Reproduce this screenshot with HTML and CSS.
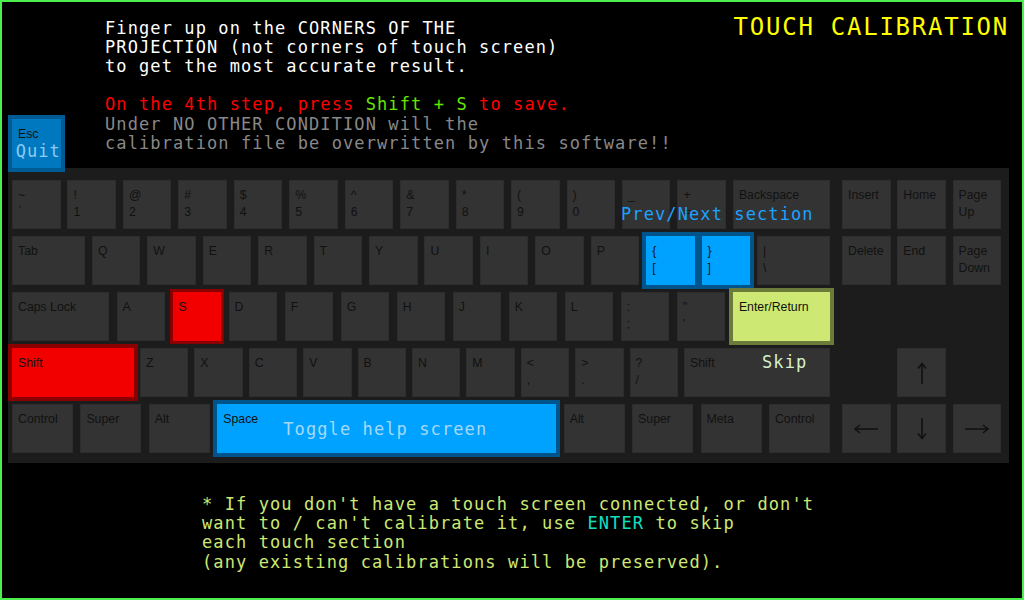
FILE: index.html
```html
<!DOCTYPE html>
<html lang="en">
<head>
<meta charset="utf-8">
<title>Touch Calibration</title>
<link rel="stylesheet" href="styles.css">
</head>
<body>
<div class="screen">
  <header class="top">
    <div class="key esc">Esc<div class="quit">Quit</div></div>
    <div class="intro">
      <p>Finger up on the CORNERS OF THE<br>PROJECTION (not corners of touch screen)<br>to get the most accurate result.</p>
      <p class="warn"><span class="red">On the 4th step, press </span><span class="green">Shift + S</span><span class="red"> to save.</span><br><span class="grey">Under NO OTHER CONDITION will the<br>calibration file be overwritten by this software!!</span></p>
    </div>
    <h1 class="title">TOUCH CALIBRATION</h1>
  </header>

  <section class="keyboard">
    <div class="main">
      <div class="row">
        <div class="key">~<br>`</div>
        <div class="key">!<br>1</div>
        <div class="key">@<br>2</div>
        <div class="key">#<br>3</div>
        <div class="key">$<br>4</div>
        <div class="key">%<br>5</div>
        <div class="key">^<br>6</div>
        <div class="key">&amp;<br>7</div>
        <div class="key">*<br>8</div>
        <div class="key">(<br>9</div>
        <div class="key">)<br>0</div>
        <div class="key">_<br>-</div>
        <div class="key">+<br>=</div>
        <div class="key w97">Backspace</div>
        <span class="hint hint-prev">Prev/Next section</span>
      </div>
      <div class="row">
        <div class="key w73">Tab</div>
        <div class="key">Q</div>
        <div class="key">W</div>
        <div class="key">E</div>
        <div class="key">R</div>
        <div class="key">T</div>
        <div class="key">Y</div>
        <div class="key">U</div>
        <div class="key">I</div>
        <div class="key">O</div>
        <div class="key">P</div>
        <div class="key hl-blue">{<br>[</div>
        <div class="key hl-blue">}<br>]</div>
        <div class="key w73">|<br>\</div>
      </div>
      <div class="row">
        <div class="key w97">Caps Lock</div>
        <div class="key">A</div>
        <div class="key hl-red thin">S</div>
        <div class="key">D</div>
        <div class="key">F</div>
        <div class="key">G</div>
        <div class="key">H</div>
        <div class="key">J</div>
        <div class="key">K</div>
        <div class="key">L</div>
        <div class="key">:<br>;</div>
        <div class="key">"<br>'</div>
        <div class="key w97 hl-enter">Enter/Return</div>
      </div>
      <div class="row">
        <div class="key w122 hl-red">Shift</div>
        <div class="key">Z</div>
        <div class="key">X</div>
        <div class="key">C</div>
        <div class="key">V</div>
        <div class="key">B</div>
        <div class="key">N</div>
        <div class="key">M</div>
        <div class="key">&lt;<br>,</div>
        <div class="key">&gt;<br>.</div>
        <div class="key">?<br>/</div>
        <div class="key w146">Shift<span class="hint hint-skip">Skip</span></div>
      </div>
      <div class="row">
        <div class="key w61">Control</div>
        <div class="key w61">Super</div>
        <div class="key w61">Alt</div>
        <div class="key w339 hl-space">Space<span class="hint hint-toggle">Toggle help screen</span></div>
        <div class="key w61">Alt</div>
        <div class="key w61">Super</div>
        <div class="key w61">Meta</div>
        <div class="key w61">Control</div>
      </div>
    </div>

    <div class="nav">
      <div class="row">
        <div class="key">Insert</div>
        <div class="key">Home</div>
        <div class="key">Page<br>Up</div>
      </div>
      <div class="row">
        <div class="key">Delete</div>
        <div class="key">End</div>
        <div class="key">Page<br>Down</div>
      </div>
      <div class="row"></div>
      <div class="row">
        <div class="key blank"></div>
        <div class="key arrow"><svg width="24" height="24" viewBox="0 0 24 24"><path d="M12 2.5V23M8 7.5L12 2.5L16 7.5"/></svg></div>
        <div class="key blank"></div>
      </div>
      <div class="row">
        <div class="key arrow"><svg width="24" height="24" viewBox="0 0 24 24"><path d="M1 12H24M6 8L1 12L6 16"/></svg></div>
        <div class="key arrow"><svg width="24" height="24" viewBox="0 0 24 24"><path d="M12 1V21.5M8 16.5L12 21.5L16 16.5"/></svg></div>
        <div class="key arrow"><svg width="24" height="24" viewBox="0 0 24 24"><path d="M0 12H23M18 8L23 12L18 16"/></svg></div>
      </div>
    </div>
  </section>

  <footer class="note">
    * If you don't have a touch screen connected, or don't<br>want to / can't calibrate it, use <span class="enter">ENTER</span> to skip<br>each touch section<br>(any existing calibrations will be preserved).
  </footer>
</div>
</body>
</html>
```

FILE: styles.css
```css
* {
  box-sizing: border-box;
  margin: 0;
  padding: 0;
}

html,
body {
  background: #000;
}

body {
  width: 1024px;
  height: 600px;
  overflow: hidden;
}

.screen {
  width: 1024px;
  height: 600px;
  border: 2px solid #4def4d;
  background: #000;
  display: flex;
  flex-direction: column;
  font-family: "DejaVu Sans Mono", monospace;
  font-size: 17px;
  line-height: 19.2px;
  letter-spacing: 1.1px;
  color: #fff;
}

/* ---------- header ---------- */
.top {
  display: flex;
  align-items: flex-start;
  height: 166px;
  padding: 0 13px 0 10px;
}

.intro {
  margin: 16.5px 0 0 44.5px;
}

.intro .warn {
  margin-top: 19.2px;
}

.red {
  color: #ff0000;
}

.green {
  color: #66e600;
}

.grey {
  color: #888;
}

.title {
  margin: 10.5px 0 0 auto;
  font-size: 24px;
  line-height: 28px;
  font-weight: normal;
  letter-spacing: 1.75px;
  color: #ffff00;
}

/* ---------- keyboard ---------- */
.keyboard {
  margin-left: 6px;
  width: 1001px;
  height: 295px;
  background: #1c1c1c;
  padding: 12px 8px 10px 4px;
  display: flex;
  gap: 12px;
}

.main {
  width: 818px;
  display: flex;
  flex-direction: column;
  gap: 7px;
}

.nav {
  width: 159px;
  display: flex;
  flex-direction: column;
  gap: 7px;
}

.row {
  position: relative;
  display: flex;
  justify-content: space-between;
  height: 49px;
}

.key {
  position: relative;
  flex: none;
  width: 48.5px;
  height: 49px;
  background: #333;
  border: 1px solid #2d2d2d;
  padding: 6px 5px 5px;
  font-family: "Liberation Sans", Arial, sans-serif;
  font-size: 12.3px;
  line-height: 17px;
  letter-spacing: 0;
  color: #111;
  white-space: nowrap;
}

.w61 { width: 61px; }
.w73 { width: 73px; }
.w97 { width: 97px; }
.w122 { width: 122px; }
.w146 { width: 146px; }
.w339 { width: 339px; }

.key.blank {
  visibility: hidden;
}

.key.arrow {
  display: flex;
  align-items: center;
  justify-content: center;
  padding: 0;
}

.key.arrow svg {
  fill: none;
  stroke: #111;
  stroke-width: 1.6;
}

/* highlighted keys */
.esc {
  align-self: flex-end;
  z-index: 1;
  background: #0078c0;
  border-color: #0078c0;
  box-shadow: 0 0 0 4px #005a94;
}

.quit {
  margin: -1px 0 0 -2.3px;
  font-family: "DejaVu Sans Mono", monospace;
  font-size: 17px;
  line-height: 19.2px;
  letter-spacing: 1px;
  color: #8ccbf0;
}

.hl-red {
  background: #f20000;
  border-color: #f20000;
  box-shadow: 0 0 0 4px #8a0000;
}

.hl-red.thin {
  box-shadow: 0 0 0 3px #8a0000;
}

.hl-blue,
.hl-space {
  background: #00a2ff;
  border-color: #00a2ff;
  box-shadow: 0 0 0 4px #00548c;
}

.hl-enter {
  background: #cde873;
  border-color: #cde873;
  box-shadow: 0 0 0 4px #6b7b3a;
}

/* overlay hints */
.hint {
  position: absolute;
  font-family: "DejaVu Sans Mono", monospace;
  font-size: 17px;
  line-height: 19.2px;
  letter-spacing: 1.1px;
  white-space: nowrap;
}

.hint-prev {
  left: 609px;
  top: 24.5px;
  color: #1ca2ff;
}

.hint-skip {
  left: 77px;
  top: 4px;
  color: #d2f2cc;
}

.hint-toggle {
  left: 65px;
  top: 15px;
  color: #a6d8f6;
}

/* ---------- footer note ---------- */
.note {
  margin: 32px 0 0 200px;
  color: #cde873;
}

.enter {
  color: #11e0c0;
}
```
